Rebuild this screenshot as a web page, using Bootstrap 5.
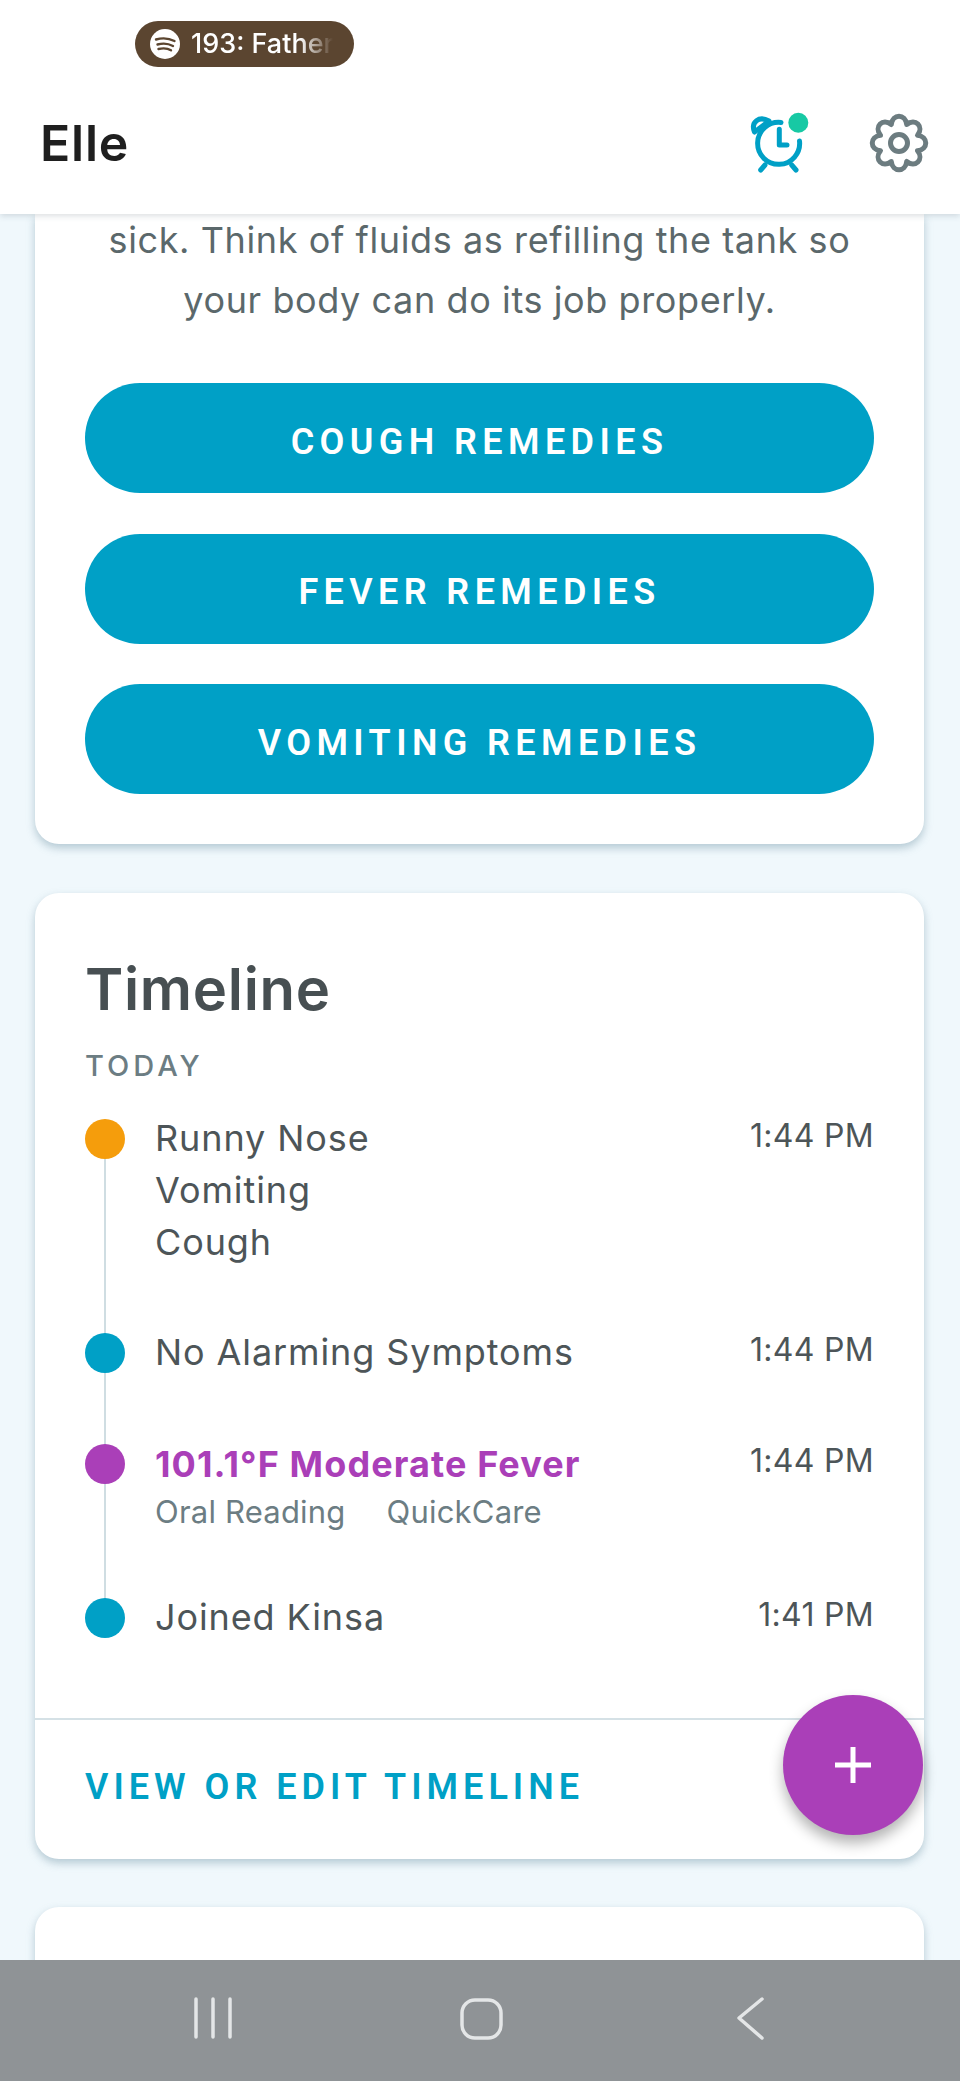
<!DOCTYPE html>
<html lang="en">
<head>
    <meta charset="UTF-8">
    <meta name="viewport" content="width=device-width, initial-scale=1.0">
    <title>Elle</title>
    <link href="https://cdn.jsdelivr.net/npm/bootstrap@5.3.0/dist/css/bootstrap.min.css" rel="stylesheet">
    <style>
        html, body { height: 2081px; overflow: hidden; }
        body { font-family: Inter, "Liberation Sans", sans-serif; background: #f0f8fc; color: #4a5558; }
        .screen { height: 2081px; }
        .top-area { height: 214px; background: #fff; box-shadow: 0 2px 6px rgba(60, 80, 90, .18); z-index: 2; position: relative; }
        .status-row { height: 88px; padding-left: 135px; padding-top: 21px; }
        .media-pill { width: 219px; height: 46px; background: #5b4530; border-radius: 23px; color: #fff; font-size: 27px; font-weight: 500; padding-left: 15px; gap: 11px; overflow: hidden; white-space: nowrap; }
        .media-text { width: 142px; overflow: hidden; -webkit-mask-image: linear-gradient(to right, #000 76%, transparent 100%); mask-image: linear-gradient(to right, #000 76%, transparent 100%); }
        .title-row { height: 110px; padding: 0 31px 0 40px; }
        .child-name { font-size: 50px; font-weight: 600; letter-spacing: .8px; color: #1f1f1f; }
        .header-icons { gap: 59px; }
        .header-icons svg { overflow: visible; }
        .app-main { height: 1746px; overflow: hidden; padding: 0 36px 0 35px; }
        .sheet { background: #fff; border: 0; border-radius: 24px; box-shadow: 0 4px 9px rgba(90, 130, 150, .4); }
        .sheet-first { border-radius: 0 0 24px 24px; height: 630px; padding: 0 50px; margin-bottom: 49px; }
        .body-copy { font-size: 36px; letter-spacing: .6px; line-height: 60px; color: #5b686b; margin: -4px 0 53px; }
        .remedy-btn { height: 110px; padding-top: 13px; border-radius: 55px; background: #00a0c6; color: #fff; border: 0; font-family: Roboto, "Liberation Sans", sans-serif; font-size: 36px; font-weight: 600; letter-spacing: 5.4px; margin-bottom: 40.5px; }
        .remedy-btn:hover { background: #00a0c6; color: #fff; }
        .sheet-timeline { height: 966px; position: relative; margin-bottom: 48px; }
        .timeline-body { padding: 60px 50px 0; height: 827px; border-bottom: 2px solid #d5e1e6; }
        .timeline-title { font-size: 58px; font-weight: 600; letter-spacing: .7px; color: #474f52; line-height: 72px; margin: 0 0 24px; }
        .day-label { font-size: 29px; font-weight: 500; letter-spacing: 4px; color: #6c7d83; line-height: 34px; margin-bottom: 29px; }
        .event-row { position: relative; padding-left: 70px; margin-bottom: 58px; }
        .event-row-wide { margin-bottom: 59px; }
        .event-row:not(:last-child)::before { content: ""; position: absolute; left: 19px; top: 28px; bottom: -86px; width: 2px; background: #cfdde2; }
        .event-dot { position: absolute; left: 0; top: 7px; width: 40px; height: 40px; border-radius: 50%; }
        .dot-orange { background: #f59d0c; }
        .dot-blue { background: #00a0c6; }
        .dot-purple { background: #aa3fb8; }
        .event-text { font-size: 36px; letter-spacing: .9px; line-height: 52px; color: #4d5558; }
        .event-time { font-size: 32px; letter-spacing: .3px; line-height: 47px; color: #4d5558; white-space: nowrap; }
        .event-fever { color: #aa3fb8; font-weight: 700; letter-spacing: 1.1px; padding-top: 1px; }
        .event-sub { font-size: 31px; letter-spacing: .2px; line-height: 43px; color: #6c7d83; gap: 41px; }
        .timeline-link { display: block; padding: 40px 50px 0; font-family: Roboto, "Liberation Sans", sans-serif; font-size: 36px; font-weight: 600; letter-spacing: 5px; color: #00a0c6; text-decoration: none; }
        .add-fab { position: absolute; right: 1px; top: 802px; width: 140px; height: 140px; border-radius: 50%; background: #aa3fb8; border: 0; box-shadow: 0 8px 14px rgba(0, 0, 0, .3); }
        .sheet-next { height: 200px; }
        .os-nav { height: 121px; background: #8f9396; position: relative; z-index: 2; }
    </style>
</head>
<body>
    <div class="screen">
        <div class="top-area">
            <div class="status-row">
                <div class="media-pill d-flex align-items-center">
                    <svg width="30" height="30" viewBox="0 0 30 30" class="flex-shrink-0">
                        <circle cx="15" cy="15" r="15" fill="#fff"/>
                        <path d="M6 10.5c6-1.8 13-1.3 18.5 1.5M7.5 15.5c5-1.4 11-1 15.5 1.5M8.5 20c4.5-1 9-.8 12.5 1.3" fill="none" stroke="#5b4530" stroke-width="2.4" stroke-linecap="round"/>
                    </svg>
                    <span class="media-text">193: Father</span>
                </div>
            </div>
            <div class="title-row d-flex align-items-center justify-content-between">
                <div class="child-name">Elle</div>
                <div class="header-icons d-flex align-items-center">
                    <svg width="60" height="60" viewBox="0 0 60 60">
                        <g fill="none" stroke="#00a0c6" stroke-width="5" stroke-linecap="round" stroke-linejoin="round">
                            <path d="M31 9.5A21 21 0 1 0 49.5 28"/>
                            <path d="M15 52l-4.3 5M41.7 52l4.3 5"/>
                            <path d="M29.3 16.3V32H37"/>
                            <path d="M4.5 19C.5 9 9 2.5 19 8z"/>
                        </g>
                        <circle cx="48.3" cy="9.7" r="10" fill="#17c9a4"/>
                    </svg>
                    <svg width="60" height="60" viewBox="0 0 60 60">
                        <g fill="none" stroke="#6c7c80" stroke-width="5" stroke-linejoin="round">
                            <circle cx="30" cy="30" r="8.5"/>
                            <path d="M22.3 11.5C23.5 .5 36.5 .5 37.7 11.5C46.3 4.6 55.4 13.7 48.5 22.3C59.5 23.5 59.5 36.5 48.5 37.7C55.4 46.3 46.3 55.4 37.7 48.5C36.5 59.5 23.5 59.5 22.3 48.5C13.7 55.4 4.6 46.3 11.5 37.7C.5 36.5 .5 23.5 11.5 22.3C4.6 13.7 13.7 4.6 22.3 11.5z"/>
                        </g>
                    </svg>
                </div>
            </div>
        </div>

        <div class="app-main">
            <div class="card sheet sheet-first">
                <p class="body-copy text-center">sick. Think of fluids as refilling the tank so<br>your body can do its job properly.</p>
                <button class="btn remedy-btn w-100">COUGH REMEDIES</button>
                <button class="btn remedy-btn w-100">FEVER REMEDIES</button>
                <button class="btn remedy-btn w-100">VOMITING REMEDIES</button>
            </div>

            <div class="card sheet sheet-timeline">
                <div class="timeline-body">
                    <h2 class="timeline-title">Timeline</h2>
                    <div class="day-label">TODAY</div>
                    <div class="event-row d-flex justify-content-between">
                        <span class="event-dot dot-orange"></span>
                        <div class="event-text">Runny Nose<br>Vomiting<br>Cough</div>
                        <div class="event-time">1:44 PM</div>
                    </div>
                    <div class="event-row event-row-wide d-flex justify-content-between">
                        <span class="event-dot dot-blue"></span>
                        <div class="event-text">No Alarming Symptoms</div>
                        <div class="event-time">1:44 PM</div>
                    </div>
                    <div class="event-row d-flex justify-content-between">
                        <span class="event-dot dot-purple"></span>
                        <div class="event-text">
                            <div class="event-fever">101.1°F Moderate Fever</div>
                            <div class="event-sub d-flex"><span>Oral Reading</span><span>QuickCare</span></div>
                        </div>
                        <div class="event-time">1:44 PM</div>
                    </div>
                    <div class="event-row d-flex justify-content-between">
                        <span class="event-dot dot-blue"></span>
                        <div class="event-text">Joined Kinsa</div>
                        <div class="event-time">1:41 PM</div>
                    </div>
                </div>
                <a href="#" class="timeline-link">VIEW OR EDIT TIMELINE</a>
                <button class="add-fab d-flex align-items-center justify-content-center">
                    <svg width="38" height="38" viewBox="0 0 38 38"><path d="M19 1v36M1 19h36" stroke="#fff" stroke-width="5"/></svg>
                </button>
            </div>

            <div class="card sheet sheet-next"></div>
        </div>

        <div class="os-nav d-flex align-items-center">
            <svg width="960" height="121" viewBox="0 0 960 121">
                <g fill="none" stroke="#e4e6e7" stroke-width="3.5" stroke-linecap="round" stroke-linejoin="round">
                    <path d="M196 39v38M213 39v38M230 39v38"/>
                    <rect x="462" y="40" width="39" height="38" rx="13"/>
                    <path d="M762 39l-23 19 23 20"/>
                </g>
            </svg>
        </div>
    </div>
    <script src="https://cdn.jsdelivr.net/npm/bootstrap@5.3.0/dist/js/bootstrap.bundle.min.js"></script>
</body>
</html>
